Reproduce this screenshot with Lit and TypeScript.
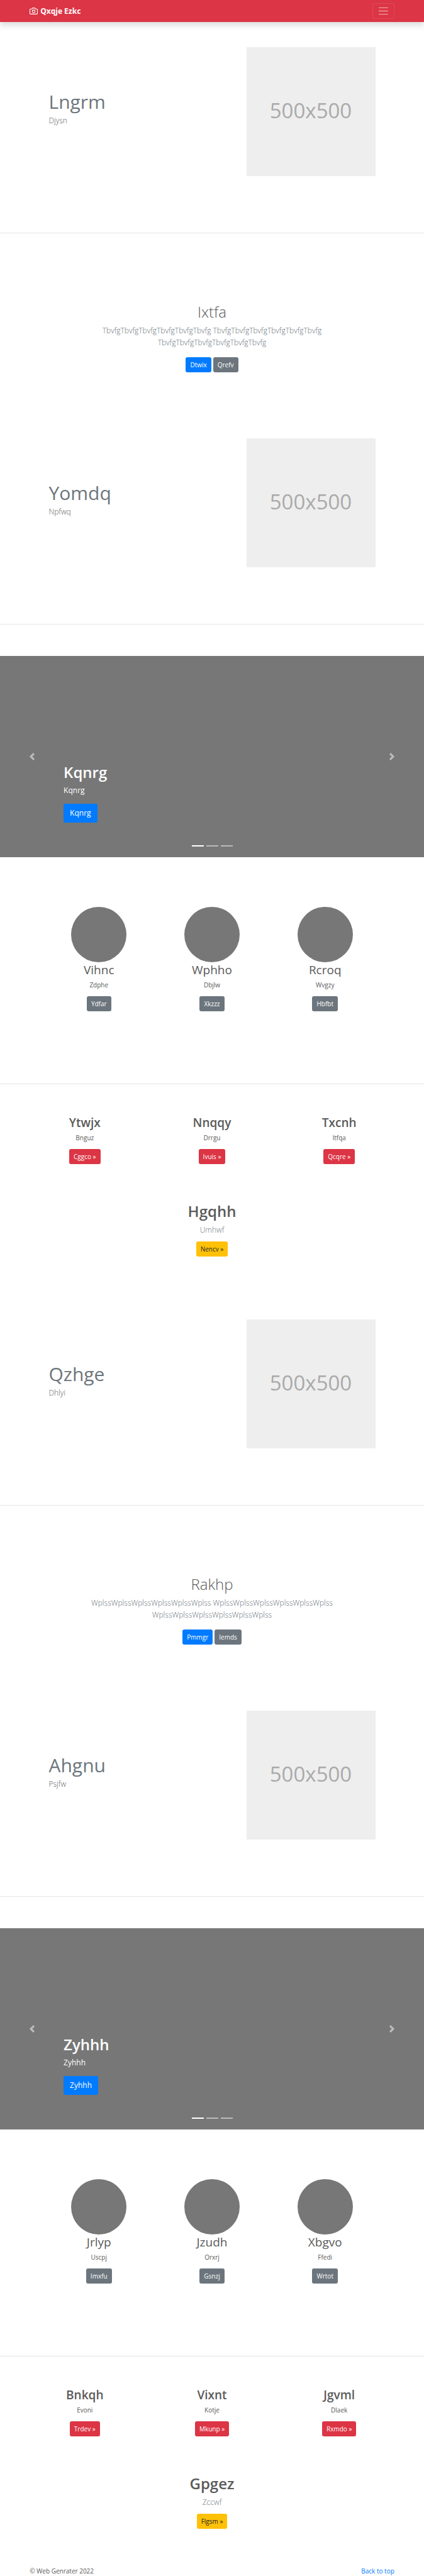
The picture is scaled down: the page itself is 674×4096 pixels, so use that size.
import { LitElement, html, css, svg } from "lit";
import { customElement, property } from "lit/decorators.js";

interface Card {
  title: string;
  text: string;
  action: string;
}

interface Group {
  intro: [string, string];
  banner: { title: string; word: string; primary: string; secondary: string };
  second: [string, string];
  slide: string;
  people: Card[];
  plans: Card[];
  closing: Card;
}

const groups: Group[] = [
  {
    intro: ["Lngrm", "Djysn"],
    banner: { title: "Ixtfa", word: "Tbvfg", primary: "Dtwix", secondary: "Qrefv" },
    second: ["Yomdq", "Npfwq"],
    slide: "Kqnrg",
    people: [
      { title: "Vihnc", text: "Zdphe", action: "Ydfar" },
      { title: "Wphho", text: "Dbjlw", action: "Xkzzz" },
      { title: "Rcroq", text: "Wvgzy", action: "Hbfbt" },
    ],
    plans: [
      { title: "Ytwjx", text: "Bnguz", action: "Cggco" },
      { title: "Nnqqy", text: "Drrgu", action: "Ivuis" },
      { title: "Txcnh", text: "Itfqa", action: "Qcqre" },
    ],
    closing: { title: "Hgqhh", text: "Umhwf", action: "Nencv" },
  },
  {
    intro: ["Qzhge", "Dhlyi"],
    banner: { title: "Rakhp", word: "Wplss", primary: "Pmmgr", secondary: "Iemds" },
    second: ["Ahgnu", "Psjfw"],
    slide: "Zyhhh",
    people: [
      { title: "Jrlyp", text: "Uscpj", action: "Imxfu" },
      { title: "Jzudh", text: "Orxrj", action: "Gsnzj" },
      { title: "Xbgvo", text: "Ffedi", action: "Wrtot" },
    ],
    plans: [
      { title: "Bnkqh", text: "Evoni", action: "Trdev" },
      { title: "Vixnt", text: "Kotje", action: "Mkunp" },
      { title: "Jgvml", text: "Dlaek", action: "Rxmdo" },
    ],
    closing: { title: "Gpgez", text: "Zccwf", action: "Flgsm" },
  },
];

const shared = css`
  :host {
    display: block;
  }
  * {
    box-sizing: border-box;
  }
  h1,
  h2,
  h3,
  p {
    margin: 0;
  }
  .btn {
    height: 24px;
    padding: 0 7px;
    border: 0;
    border-radius: 3px;
    font-family: inherit;
    font-size: 10px;
    line-height: 24px;
    color: #fff;
    cursor: pointer;
  }
  .primary {
    background: #007bff;
  }
  .secondary {
    background: #6c757d;
  }
  .danger {
    background: #dc3545;
  }
  .warning {
    background: #ffc107;
    color: #212529;
  }
  .lead {
    font-size: 12px;
    line-height: 19px;
    font-weight: 300;
  }
`;

@customElement("site-header")
class SiteHeader extends LitElement {
  static styles = [
    shared,
    css`
      .bar {
        display: flex;
        align-items: center;
        justify-content: space-between;
        height: 35px;
        padding: 0 7%;
        background: #dc3545;
        box-shadow: 0 5px 10px rgba(0, 0, 0, 0.15);
      }
      .brand {
        display: flex;
        align-items: center;
        gap: 4px;
        color: #fff;
        font-size: 12px;
        font-weight: 700;
        line-height: 19px;
        text-decoration: none;
      }
      .toggler {
        display: flex;
        align-items: center;
        justify-content: center;
        width: 35px;
        height: 25px;
        padding: 0;
        border: 1px solid rgba(255, 255, 255, 0.1);
        border-radius: 3px;
        background: transparent;
      }
    `,
  ];

  render() {
    return html`
      <header class="bar">
        <a class="brand" href="#">
          <svg width="13" height="13" viewBox="0 0 24 24" fill="none" stroke="#fff" stroke-width="2" stroke-linecap="round" stroke-linejoin="round" aria-hidden="true">
            <path d="M23 19a2 2 0 0 1-2 2H3a2 2 0 0 1-2-2V8a2 2 0 0 1 2-2h4l2-3h6l2 3h4a2 2 0 0 1 2 2z"></path>
            <circle cx="12" cy="13" r="4"></circle>
          </svg>
          <span>Qxqje Ezkc</span>
        </a>
        <button class="toggler" type="button" aria-label="Toggle navigation">
          <svg width="19" height="19" viewBox="0 0 30 30" stroke="rgba(255,255,255,0.5)" stroke-width="2" stroke-linecap="round">
            <path d="M4 7h22M4 15h22M4 23h22"></path>
          </svg>
        </button>
      </header>
    `;
  }
}

@customElement("feature-row")
class FeatureRow extends LitElement {
  @property() heading = "";
  @property() text = "";

  static styles = [
    shared,
    css`
      .row {
        display: flex;
        justify-content: space-between;
        align-items: flex-start;
        padding: 40px 11.5% 90px;
        border-bottom: 1px solid #e5e5e5;
      }
      .copy {
        padding-top: 68px;
      }
      .heading {
        margin-bottom: 2px;
        color: #6c757d;
        font-size: 30px;
        line-height: 37px;
        font-weight: 400;
      }
      .picture {
        display: flex;
        align-items: center;
        justify-content: center;
        flex: 0 0 205px;
        aspect-ratio: 1;
        padding-bottom: 4px;
        background: #eee;
        color: #aaa;
        font-size: 33px;
      }
    `,
  ];

  render() {
    return html`
      <section class="row">
        <div class="copy">
          <h2 class="heading">${this.heading}</h2>
          <p class="lead">${this.text}</p>
        </div>
        <div class="picture">500x500</div>
      </section>
    `;
  }
}

@customElement("slide-show")
class SlideShow extends LitElement {
  @property() text = "";

  static styles = [
    shared,
    css`
      .frame {
        position: relative;
        display: grid;
        grid-template-columns: 15% 1fr 15%;
        height: 320px;
        margin: 50px 0 79px;
        background: #777;
        color: #fff;
      }
      .control {
        display: flex;
        align-items: center;
        justify-content: center;
        padding: 0;
        border: 0;
        background: transparent;
        opacity: 0.5;
      }
      .caption {
        align-self: end;
        padding-bottom: 55px;
      }
      .title {
        margin-bottom: 4px;
        font-size: 24px;
        line-height: 30px;
        font-weight: 600;
      }
      .body {
        margin-bottom: 12px;
        font-size: 12px;
        line-height: 19px;
      }
      .large {
        height: 30px;
        padding: 0 10px;
        font-size: 12px;
        line-height: 30px;
      }
      .dots {
        position: absolute;
        left: 0;
        right: 0;
        bottom: 17px;
        display: flex;
        justify-content: center;
        gap: 4px;
      }
      .dot {
        width: 19px;
        height: 2px;
        background: #fff;
        opacity: 0.5;
      }
      .active {
        opacity: 1;
      }
    `,
  ];

  private chevron(d: string) {
    return html`<svg width="12" height="12" viewBox="0 0 8 8" fill="#fff">${svg`<path d=${d}></path>`}</svg>`;
  }

  render() {
    return html`
      <section class="frame">
        <button class="control" type="button" aria-label="Previous">
          ${this.chevron("M5.25 0l-4 4 4 4 1.5-1.5L4.25 4l2.5-2.5L5.25 0z")}
        </button>
        <div class="caption">
          <h1 class="title">${this.text}</h1>
          <p class="body">${this.text}</p>
          <button class="btn primary large" type="button">${this.text}</button>
        </div>
        <button class="control" type="button" aria-label="Next">
          ${this.chevron("M2.75 0l-1.5 1.5L3.75 4l-2.5 2.5L2.75 8l4-4-4-4z")}
        </button>
        <div class="dots">
          <span class="dot active"></span>
          <span class="dot"></span>
          <span class="dot"></span>
        </div>
      </section>
    `;
  }
}

@customElement("app-root")
class AppRoot extends LitElement {
  static styles = [
    shared,
    css`
      :host {
        background: #fff;
        color: #5a5a5a;
        font-family: "Segoe UI", "Open Sans", "Noto Sans", sans-serif;
        font-size: 10px;
        line-height: 15px;
      }
      .banner {
        padding: 110px 16px 65px;
        text-align: center;
      }
      .banner .title {
        margin-bottom: 5px;
        font-size: 24px;
        line-height: 30px;
        font-weight: 300;
      }
      .banner .lead {
        max-width: 400px;
        margin: 0 auto 14px;
      }
      .muted {
        color: #6c757d;
      }
      .actions {
        display: flex;
        justify-content: center;
        gap: 3px;
      }
      .cards {
        display: grid;
        grid-template-columns: repeat(3, 1fr);
        text-align: center;
      }
      .people {
        padding: 0 10% 115px;
        border-bottom: 1px solid #e5e5e5;
      }
      .plans {
        padding: 49px 5% 60px;
      }
      .avatar {
        width: 88px;
        height: 88px;
        margin: 0 auto;
        border-radius: 50%;
        background: #777;
      }
      .name {
        margin-bottom: 5px;
        font-size: 19px;
        line-height: 24px;
        font-weight: 400;
      }
      .strong {
        font-weight: 600;
      }
      .text {
        margin-bottom: 10px;
      }
      .closing {
        padding-bottom: 60px;
        text-align: center;
      }
      .closing .title {
        margin-bottom: 5px;
        font-size: 24px;
        line-height: 30px;
        font-weight: 600;
      }
      .closing .lead {
        margin-bottom: 9px;
      }
      .footer {
        display: flex;
        justify-content: space-between;
        padding: 0 7%;
      }
      .top {
        color: #007bff;
        text-decoration: none;
      }
    `,
  ];

  private group(g: Group) {
    const long = g.banner.word.repeat(6);
    return html`
      <feature-row heading=${g.intro[0]} text=${g.intro[1]}></feature-row>
      <section class="banner">
        <h1 class="title">${g.banner.title}</h1>
        <p class="lead muted">${long} ${long} ${long}</p>
        <div class="actions">
          <button class="btn primary" type="button">${g.banner.primary}</button>
          <button class="btn secondary" type="button">${g.banner.secondary}</button>
        </div>
      </section>
      <feature-row heading=${g.second[0]} text=${g.second[1]}></feature-row>
      <slide-show text=${g.slide}></slide-show>
      <section class="cards people">
        ${g.people.map(
          (c) => html`<div>
            <div class="avatar"></div>
            <h2 class="name">${c.title}</h2>
            <p class="text">${c.text}</p>
            <button class="btn secondary" type="button">${c.action}</button>
          </div>`
        )}
      </section>
      <section class="cards plans">
        ${g.plans.map(
          (c) => html`<div>
            <h2 class="name strong">${c.title}</h2>
            <p class="text">${c.text}</p>
            <button class="btn danger" type="button">${c.action} »</button>
          </div>`
        )}
      </section>
      <section class="closing">
        <h1 class="title">${g.closing.title}</h1>
        <p class="lead muted">${g.closing.text}</p>
        <button class="btn warning" type="button">${g.closing.action} »</button>
      </section>
    `;
  }

  render() {
    return html`
      <site-header></site-header>
      <main>${groups.map((g) => this.group(g))}</main>
      <footer class="footer">
        <span>© Web Genrater 2022</span>
        <a class="top" href="#">Back to top</a>
      </footer>
    `;
  }
}
